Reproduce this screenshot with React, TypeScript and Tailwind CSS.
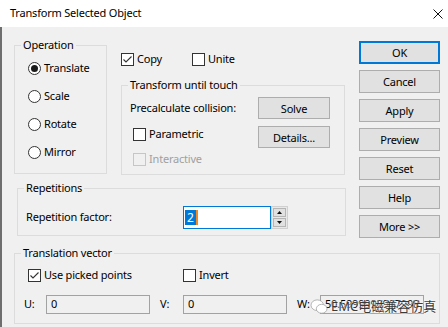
import type { ReactNode } from "react";

function Check({ label, checked = false, disabled = false }: { label: string; checked?: boolean; disabled?: boolean }) {
  return (
    <label className="flex h-[16px] items-center gap-[3px]">
      <span
        className={`flex h-[13px] w-[13px] shrink-0 items-center justify-center border ${
          disabled ? "border-[#c6c6c6] bg-[#f0f0f0]" : "border-[#333] bg-white"
        }`}
      >
        {checked && (
          <svg width="11" height="11" viewBox="0 0 11 11">
            <path d="M1.5 5.5 L4 8 L9.5 2.5" fill="none" stroke="#333" strokeWidth="1.1" />
          </svg>
        )}
      </span>
      <span className={disabled ? "text-[#a0a0a0]" : ""}>{label}</span>
    </label>
  );
}

function Radio({ label, checked = false }: { label: string; checked?: boolean }) {
  return (
    <label className="flex h-[28px] items-center gap-[3px]">
      <span className="flex h-[13px] w-[13px] items-center justify-center rounded-full border border-[#333] bg-white">
        {checked && <span className="h-[7px] w-[7px] rounded-full bg-[#1a1a1a]" />}
      </span>
      <span>{label}</span>
    </label>
  );
}

function Group({ title, className = "", children }: { title: string; className?: string; children?: ReactNode }) {
  return (
    <div className={`border border-[#dcdcdc] ${className}`}>
      <div className="-mt-[9px] ml-[6px] w-fit bg-[#f0f0f0] px-[2px] leading-[16px]">{title}</div>
      {children}
    </div>
  );
}

function Btn({ children, className = "" }: { children: ReactNode; className?: string }) {
  return (
    <button
      type="button"
      className={`flex items-center justify-center border bg-[#e1e1e1] leading-none ${className || "border-[#adadad]"}`}
    >
      {children}
    </button>
  );
}

function ReadOnly({ value, width }: { value: string; width: string }) {
  return (
    <div className={`flex h-[19px] items-center overflow-hidden whitespace-nowrap border border-[#a2a2a2] bg-[#f0f0f0] pl-[4px] ${width}`}>
      {value}
    </div>
  );
}

const buttons = ["Cancel", "Apply", "Preview", "Reset", "Help", "More >>"];

export default function App() {
  return (
    <div className="relative h-[327px] w-[448px] overflow-hidden bg-[#f0f0f0] font-['Noto_Sans',sans-serif] text-[11px] tracking-[-0.2px] text-black">
      {/* title bar */}
      <div className="flex h-[27px] items-center justify-between bg-white pl-[10px] pr-[5px]">
        <span>Transform Selected Object</span>
        <svg width="10" height="10" viewBox="0 0 10 10">
          <path d="M0.5 0.5 L9.5 9.5 M9.5 0.5 L0.5 9.5" stroke="#111" strokeWidth="1" />
        </svg>
      </div>

      <div className="h-[300px] border-l-2 border-[#6e6e6e] pl-[12px]">
        <div className="flex h-[226px] items-start">
          <div className="w-[332px]">
            <div className="flex items-start">
              <Group title="Operation" className="mt-[18px] h-[129px] w-[93px]">
                <div className="mt-[1px] flex flex-col pl-[13px]">
                  <Radio label="Translate" checked />
                  <Radio label="Scale" />
                  <Radio label="Rotate" />
                  <Radio label="Mirror" />
                </div>
              </Group>

              <div className="ml-[14px] mt-[24px] w-[224px]">
                <div className="flex h-[16px] items-center">
                  <div className="w-[71px]">
                    <Check label="Copy" checked />
                  </div>
                  <Check label="Unite" />
                </div>
                <Group title="Transform until touch" className="mt-[18px] h-[90px]">
                  <div className="mt-[4px] flex h-[22px] items-center justify-between pl-[8px] pr-[14px]">
                    <span>Precalculate collision:</span>
                    <Btn className="h-[22px] w-[72px] border-[#adadad]">Solve</Btn>
                  </div>
                  <div className="mt-[7px] flex h-[22px] items-start justify-between pl-[11px] pr-[14px]">
                    <Check label="Parametric" />
                    <Btn className="h-[22px] w-[72px] border-[#adadad]">Details...</Btn>
                  </div>
                  <div className="mt-[3px] pl-[11px]">
                    <Check label="Interactive" disabled />
                  </div>
                </Group>
              </div>
            </div>

            <Group title="Repetitions" className="ml-[3px] mt-[13px] h-[48px] w-[329px]">
              <div className="mt-[10px] flex items-center pl-[8px]">
                <span className="w-[157px]">Repetition factor:</span>
                <div className="flex h-[23px]">
                  <div className="flex w-[88px] items-center border border-[#0078d7] bg-white pl-[1px]">
                    <span className="border-r-2 border-[#f08a24] bg-[#0078d7] px-[2px] text-[12px] leading-[15px] text-white">2</span>
                  </div>
                  <div className="flex w-[17px] flex-col gap-[1px] border border-[#d0d0d0] bg-[#e8e8e8] p-[1px]">
                    <div className="flex flex-1 items-center justify-center border border-[#b5b5b5] bg-[#e1e1e1]">
                      <svg width="5" height="3" viewBox="0 0 5 3">
                        <path d="M0 3 L2.5 0 L5 3 Z" fill="#111" />
                      </svg>
                    </div>
                    <div className="flex flex-1 items-center justify-center border border-[#b5b5b5] bg-[#e1e1e1]">
                      <svg width="5" height="3" viewBox="0 0 5 3">
                        <path d="M0 0 L2.5 3 L5 0 Z" fill="#111" />
                      </svg>
                    </div>
                  </div>
                </div>
              </div>
            </Group>
          </div>

          <div className="ml-[13px] mt-[14px] flex w-[81px] flex-col gap-[6px]">
            <Btn className="h-[23px] border-2 border-[#0078d7]">OK</Btn>
            {buttons.map((b) => (
              <Btn key={b} className="h-[23px] border-[#adadad]">
                {b}
              </Btn>
            ))}
          </div>
        </div>

        <Group title="Translation vector" className="h-[71px] w-[426px]">
          <div className="mt-[6px] flex h-[16px] items-center pl-[13px]">
            <div className="w-[155px]">
              <Check label="Use picked points" checked />
            </div>
            <Check label="Invert" />
          </div>
          <div className="mt-[12px] flex items-center pl-[9px]">
            <span className="w-[22px]">U:</span>
            <ReadOnly value="0" width="w-[104px]" />
            <span className="ml-[10px] w-[23px]">V:</span>
            <ReadOnly value="0" width="w-[104px]" />
            <span className="ml-[10px] w-[23px]">W:</span>
            <ReadOnly value="50.5999999997998" width="w-[104px]" />
          </div>
        </Group>
      </div>

      {/* watermark */}
      <div className="absolute left-[310px] top-[297px] flex items-center gap-[3px] text-[13px] tracking-normal text-[#3a3a3a] [text-shadow:0_0_2px_#fff,0_0_2px_#fff]">
        <svg width="18" height="16" viewBox="0 0 20 18">
          <ellipse cx="8" cy="7" rx="7" ry="6" fill="#fff" stroke="#9a9a9a" strokeWidth="0.8" />
          <ellipse cx="13" cy="11" rx="6" ry="5" fill="#fff" stroke="#9a9a9a" strokeWidth="0.8" />
        </svg>
        <span className="font-['Noto_Sans','Noto_Sans_CJK_SC',sans-serif]">EMC电磁兼容仿真</span>
      </div>
    </div>
  );
}
